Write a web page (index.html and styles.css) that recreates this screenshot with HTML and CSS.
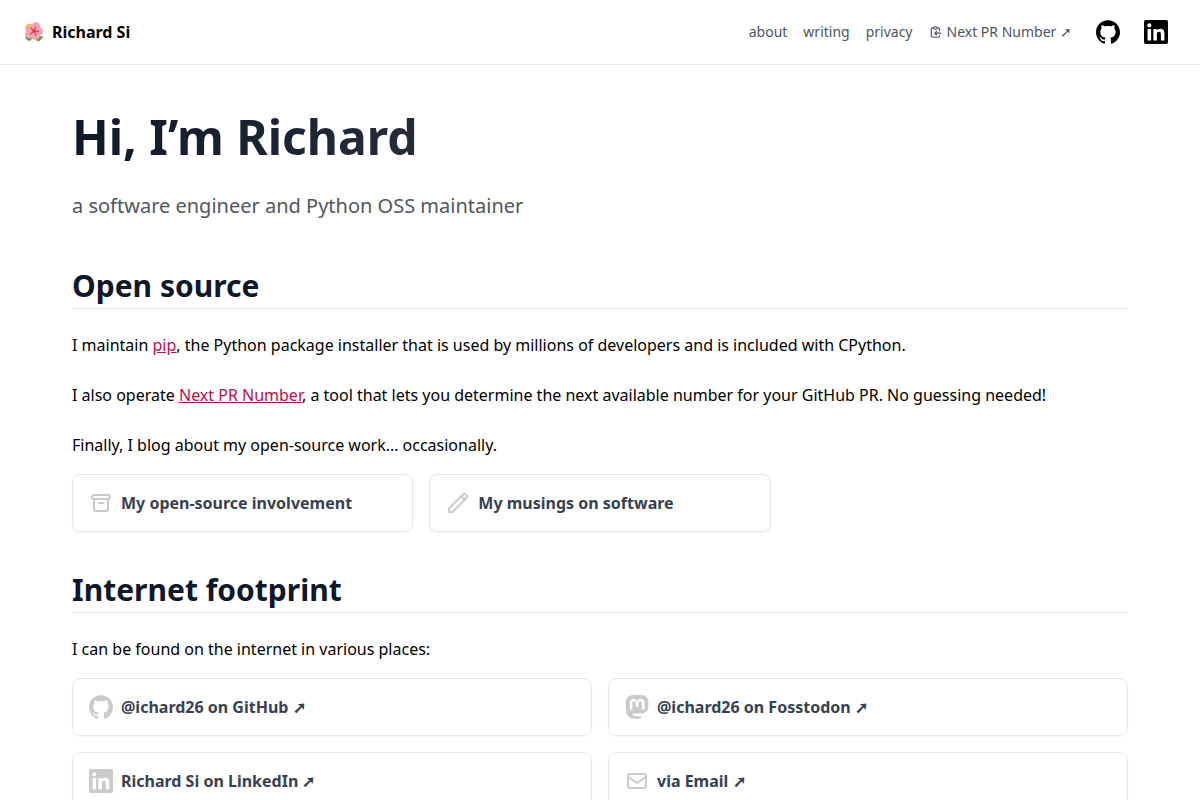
FILE: index.html
```
<!DOCTYPE html>
<html lang="en">
<head>
<meta charset="UTF-8">
<meta name="viewport" content="width=device-width, initial-scale=1.0">
<title>Richard Si</title>
<link rel="stylesheet" href="styles.css">
</head>
<body>
  <!-- Icons used more than once -->
  <svg class="sprite" aria-hidden="true">
    <symbol id="github" viewBox="0 0 24 24"><path fill="currentColor" d="M12 .297c-6.63 0-12 5.373-12 12 0 5.303 3.438 9.8 8.205 11.385.6.113.82-.258.82-.577 0-.285-.01-1.04-.015-2.04-3.338.724-4.042-1.61-4.042-1.61C4.422 18.07 3.633 17.7 3.633 17.7c-1.087-.744.084-.729.084-.729 1.205.084 1.838 1.236 1.838 1.236 1.07 1.835 2.809 1.305 3.495.998.108-.776.417-1.305.76-1.605-2.665-.3-5.466-1.332-5.466-5.93 0-1.31.465-2.38 1.235-3.22-.135-.303-.54-1.523.105-3.176 0 0 1.005-.322 3.3 1.23.96-.267 1.98-.399 3-.405 1.02.006 2.04.138 3 .405 2.28-1.552 3.285-1.23 3.285-1.23.645 1.653.24 2.873.12 3.176.765.84 1.23 1.91 1.23 3.22 0 4.61-2.805 5.625-5.475 5.92.42.36.81 1.096.81 2.22 0 1.606-.015 2.896-.015 3.286 0 .315.21.69.825.57C20.565 22.092 24 17.592 24 12.297c0-6.627-5.373-12-12-12"/></symbol>
    <symbol id="linkedin" viewBox="0 0 24 24"><path fill="currentColor" d="M20.447 20.452h-3.554v-5.569c0-1.328-.027-3.037-1.852-3.037-1.853 0-2.136 1.445-2.136 2.939v5.667H9.351V9h3.414v1.561h.046c.477-.9 1.637-1.85 3.37-1.85 3.601 0 4.267 2.37 4.267 5.455v6.286zM5.337 7.433c-1.144 0-2.063-.926-2.063-2.065 0-1.138.92-2.063 2.063-2.063 1.14 0 2.064.925 2.064 2.063 0 1.139-.925 2.065-2.064 2.065zm1.782 13.019H3.555V9h3.564v11.452zM22.225 0H1.771C.792 0 0 .774 0 1.729v20.542C0 23.227.792 24 1.771 24h20.451C23.2 24 24 23.227 24 22.271V1.729C24 .774 23.2 0 22.222 0h.003z"/></symbol>
  </svg>

  <header class="navbar">
    <a class="brand" href="/">
      <svg class="flower" viewBox="0 0 20 20" aria-hidden="true">
        <path fill="#6d9f4a" d="M1 15c2-2 5-1.500 7 1-.5 2-1.500 3-3 3-1.500-1-3.500-1.500-4-4zM19 14c-3-.5-6 .5-7.500 3 1 2 2.500 2.500 4 2 1.500-1.500 3-2.500 3.500-5z"/>
        <g fill="#f5a3b0">
          <circle cx="12" cy="4.500" r="4.300"/>
          <circle cx="15" cy="9.500" r="4"/>
          <circle cx="11.500" cy="13.500" r="4.300"/>
          <circle cx="5.500" cy="12" r="4.300"/>
          <circle cx="5.500" cy="6" r="4.300"/>
          <circle cx="10" cy="9" r="4"/>
        </g>
        <path fill="none" stroke="#e2455f" stroke-width="1.300" stroke-linecap="round" d="M10 9l1.500-4M10 9l4.500.5M10 9l2 4.500M10 9l-3.500 3M10 9L7 6"/>
        <path fill="none" stroke="#f9be3c" stroke-width="2.600" stroke-linecap="round" d="M5 3l1.500.5"/>
        <circle cx="10" cy="9" r="1.500" fill="#d92f4e"/>
      </svg>
      <span>Richard Si</span>
    </a>
    <nav class="menu">
      <a href="/about">about</a>
      <a href="/writing">writing</a>
      <a href="/privacy">privacy</a>
      <a class="tool" href="#next-pr-number">
        <svg class="clipboard" viewBox="0 0 24 24" aria-hidden="true"><path d="M8 5H6a2 2 0 00-2 2v12a2 2 0 002 2h10a2 2 0 002-2v-1M8 5a2 2 0 002 2h2a2 2 0 002-2M8 5a2 2 0 012-2h2a2 2 0 012 2m0 0h2a2 2 0 012 2v3m2 4H10m0 0l3-3m-3 3l3 3"/></svg>
        <span>Next PR Number ➚</span>
      </a>
      <div class="socials">
        <a href="#github-profile" aria-label="GitHub"><svg class="icon"><use href="#github"/></svg></a>
        <a href="#linkedin-profile" aria-label="LinkedIn"><svg class="icon"><use href="#linkedin"/></svg></a>
      </div>
    </nav>
  </header>

  <main class="content">
    <h1>Hi, I’m Richard</h1>
    <p class="subtitle">a software engineer and Python OSS maintainer</p>

    <h2>Open source</h2>
    <p>I maintain <a href="#pip">pip</a>, the Python package installer that is used by millions of developers and is included with CPython.</p>
    <p>I also operate <a href="#next-pr-number">Next PR Number</a>, a tool that lets you determine the next available number for your GitHub PR. No guessing needed!</p>
    <p>Finally, I blog about my open-source work… occasionally.</p>
    <div class="cards three">
      <a class="card" href="/open-source">
        <svg class="icon line" viewBox="0 0 24 24" aria-hidden="true"><path d="M5 8h14M5 8a2 2 0 110-4h14a2 2 0 110 4M5 8v10a2 2 0 002 2h10a2 2 0 002-2V8m-9 4h4"/></svg>
        <span>My open-source involvement</span>
      </a>
      <a class="card" href="/writing">
        <svg class="icon line" viewBox="0 0 24 24" aria-hidden="true"><path d="M15.232 5.232l3.536 3.536m-2.036-5.036a2.500 2.500 0 113.536 3.536L6.500 21.036H3v-3.572L16.732 3.732z"/></svg>
        <span>My musings on software</span>
      </a>
    </div>

    <h2>Internet footprint</h2>
    <p>I can be found on the internet in various places:</p>
    <div class="cards two">
      <a class="card" href="#github-profile">
        <svg class="icon" aria-hidden="true"><use href="#github"/></svg>
        <span>@ichard26 on GitHub ➚</span>
      </a>
      <a class="card" href="#fosstodon">
        <svg class="icon" viewBox="0 0 24 24" aria-hidden="true"><path fill="currentColor" d="M23.268 5.313c-.35-2.578-2.617-4.61-5.304-5.004C17.51.242 15.792 0 11.813 0h-.03c-3.98 0-4.835.242-5.288.309C3.882.692 1.496 2.518.917 5.127.64 6.412.61 7.837.661 9.143c.074 1.874.088 3.745.26 5.611.118 1.24.325 2.47.62 3.68.55 2.237 2.777 4.098 4.96 4.857 2.336.792 4.849.923 7.256.38.265-.061.527-.132.786-.213.585-.184 1.27-.39 1.774-.753a.057.057 0 0 0 .023-.043v-1.809a.052.052 0 0 0-.02-.041.053.053 0 0 0-.046-.01 20.282 20.282 0 0 1-4.709.545c-2.73 0-3.463-1.284-3.674-1.818a5.593 5.593 0 0 1-.319-1.433.053.053 0 0 1 .066-.054c1.517.363 3.072.546 4.632.546.376 0 .75 0 1.125-.01 1.57-.044 3.224-.124 4.768-.422.038-.008.077-.015.11-.024 2.435-.464 4.753-1.92 4.989-5.604.008-.145.03-1.52.03-1.67.002-.512.167-3.63-.024-5.545zm-3.748 9.195h-2.561V8.29c0-1.309-.55-1.976-1.67-1.976-1.23 0-1.846.79-1.846 2.35v3.403h-2.546V8.663c0-1.56-.617-2.35-1.848-2.35-1.112 0-1.668.668-1.67 1.977v6.218H4.822V8.102c0-1.31.337-2.35 1.011-3.12.696-.77 1.608-1.164 2.74-1.164 1.311 0 2.302.5 2.962 1.498l.638 1.06.638-1.06c.66-.999 1.65-1.498 2.96-1.498 1.13 0 2.043.395 2.74 1.164.675.77 1.012 1.81 1.012 3.12z"/></svg>
        <span>@ichard26 on Fosstodon ➚</span>
      </a>
      <a class="card" href="#linkedin-profile">
        <svg class="icon" aria-hidden="true"><use href="#linkedin"/></svg>
        <span>Richard Si on LinkedIn ➚</span>
      </a>
      <a class="card" href="#email">
        <svg class="icon line" viewBox="0 0 24 24" aria-hidden="true"><path d="M3 8l7.890 5.260a2 2 0 002.220 0L21 8M5 19h14a2 2 0 002-2V7a2 2 0 00-2-2H5a2 2 0 00-2 2v10a2 2 0 002 2z"/></svg>
        <span>via Email ➚</span>
      </a>
    </div>
  </main>
</body>
</html>
```

FILE: styles.css
```
body {
  margin: 0;
  background-color: #fff;
  color: #000;
  font-family: "Noto Sans", sans-serif;
  font-size: 16px;
  line-height: 28px;
}

.sprite {
  display: none;
}

.icon {
  flex: none;
  width: 24px;
  height: 24px;
}

/* Top bar */
.navbar {
  display: flex;
  align-items: center;
  justify-content: space-between;
  height: 64px;
  padding: 0 24px;
  border-bottom: 1px solid #e9eaec;
}

.brand {
  display: flex;
  align-items: center;
  gap: 8px;
  color: #000;
  font-weight: 700;
  text-decoration: none;
}

.flower {
  width: 20px;
  height: 20px;
}

.menu {
  display: flex;
  align-items: center;
  gap: 16px;
  font-size: 14px;
}

.menu a {
  color: #4b5563;
  text-decoration: none;
}

.menu .tool {
  display: flex;
  align-items: center;
  gap: 4px;
}

.clipboard {
  width: 14px;
  height: 14px;
}

.clipboard,
.line {
  fill: none;
  stroke: currentColor;
  stroke-width: 2;
  stroke-linecap: round;
  stroke-linejoin: round;
}

.menu .socials {
  display: flex;
  gap: 8px;
}

.menu .socials a {
  display: flex;
  padding: 8px;
  color: #000;
}

/* Page content */
.content {
  max-width: 1056px;
  margin: 0 auto;
  padding: 48px 24px;
}

h1 {
  margin: 0;
  background: linear-gradient(to right, #111827, #4b5563);
  background-clip: text;
  -webkit-background-clip: text;
  color: transparent;
  font-size: 48px;
  font-weight: 700;
  line-height: 48px;
}

h2 {
  margin: 40px 0 0;
  padding-bottom: 4px;
  border-bottom: 1px solid #e9eaec;
  color: #0f172a;
  font-size: 30px;
  font-weight: 700;
  line-height: 36px;
}

p {
  margin: 22px 0 0;
}

p a {
  color: #b8104a;
}

.subtitle {
  margin: 31px 0 48px;
  color: #52565d;
  font-size: 20px;
}

/* Link cards */
.cards {
  display: grid;
  gap: 16px;
  margin-top: 15px;
}

.three {
  grid-template-columns: repeat(3, 1fr);
}

.two {
  grid-template-columns: repeat(2, 1fr);
}

.card {
  display: flex;
  align-items: center;
  gap: 8px;
  padding: 16px;
  border: 1px solid #e5e7eb;
  border-radius: 8px;
  box-shadow: 0 1px 2px rgba(0, 0, 0, 0.05);
  color: #374151;
  font-weight: 700;
  line-height: 24px;
  text-decoration: none;
}

.card .icon {
  color: #cacaca;
}
```
